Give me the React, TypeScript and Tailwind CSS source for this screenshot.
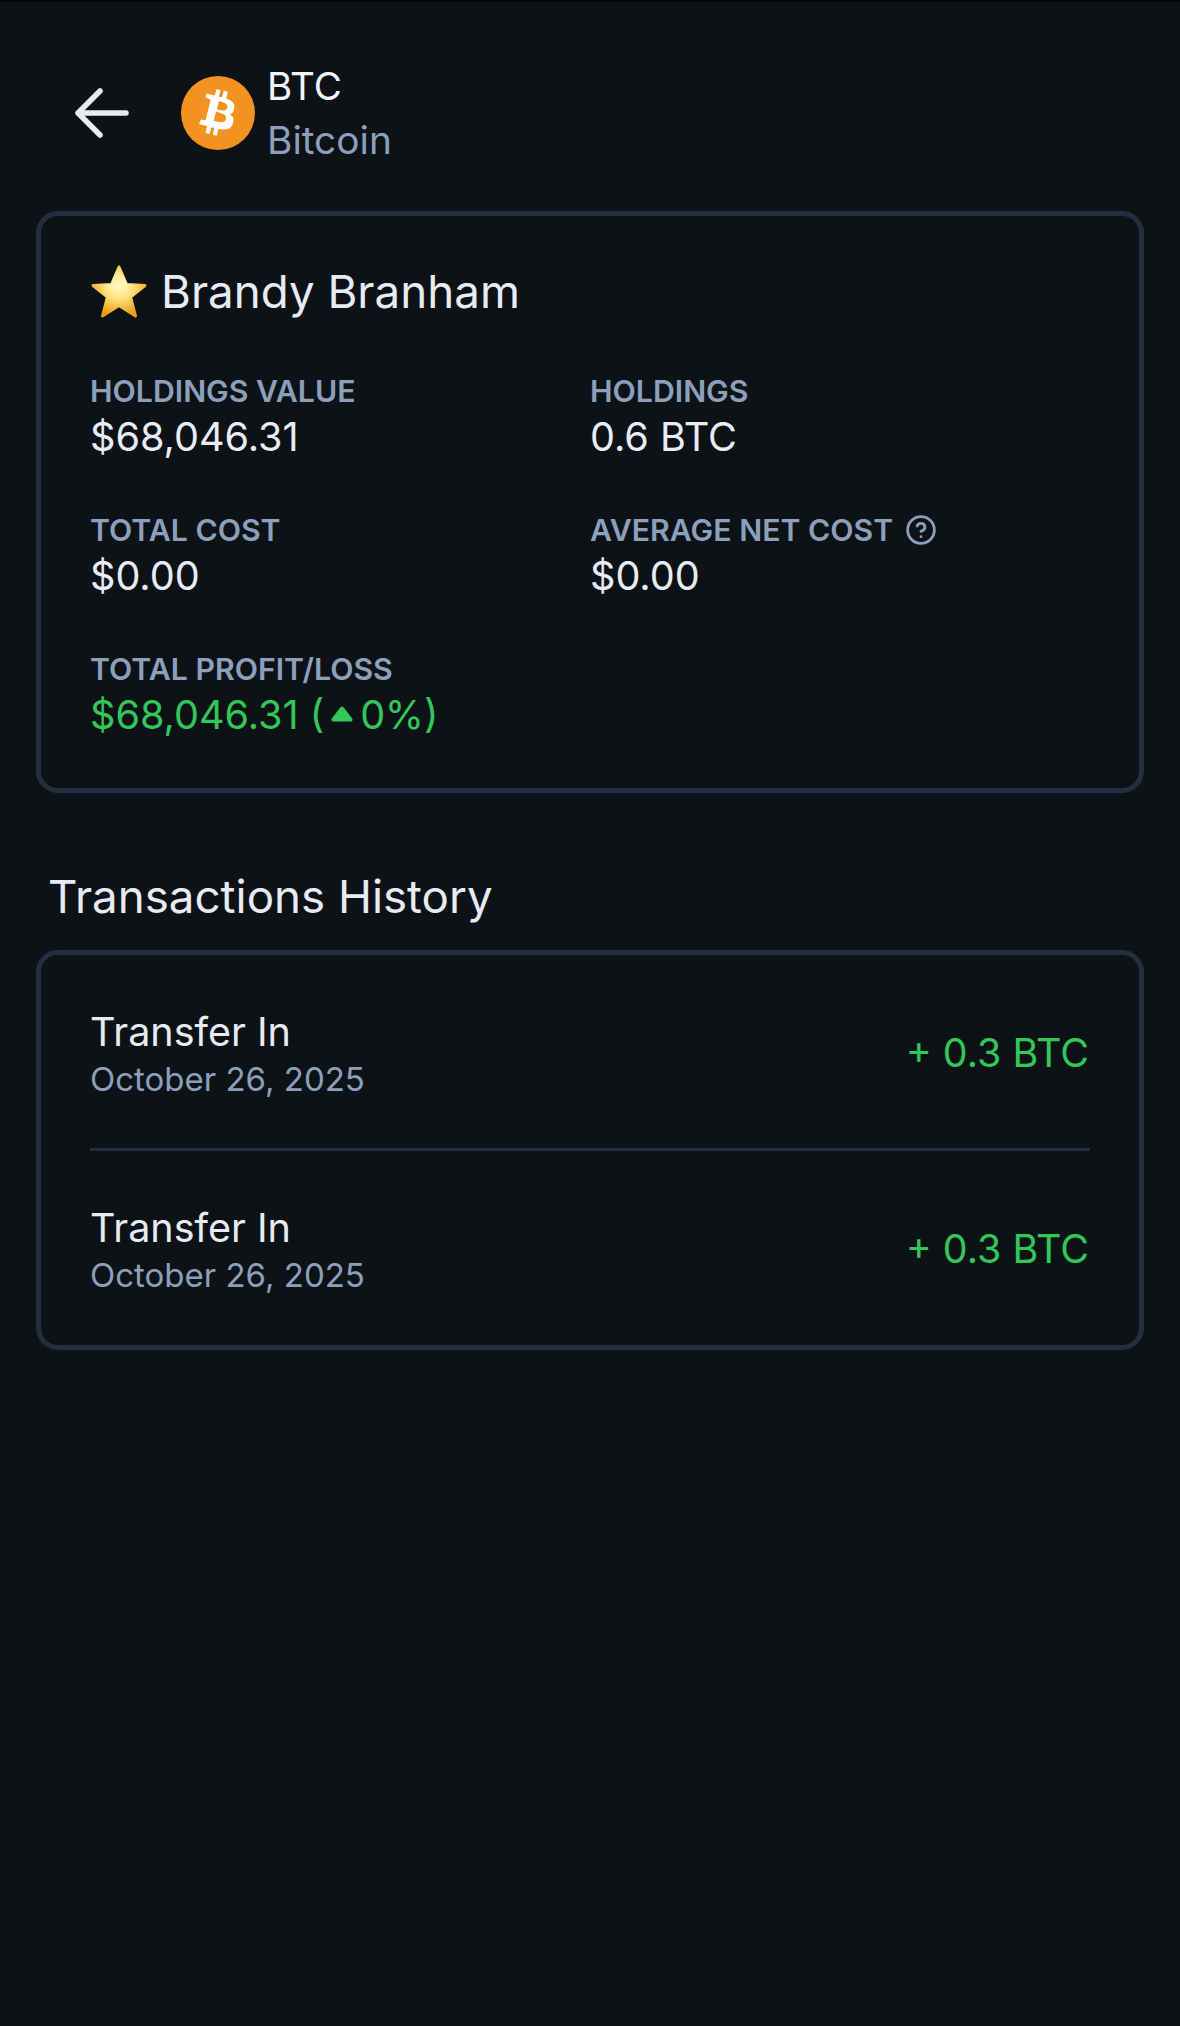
import { CircleHelp } from "lucide-react";

const stats = [
  { label: "HOLDINGS VALUE", value: "$68,046.31" },
  { label: "HOLDINGS", value: "0.6 BTC" },
  { label: "TOTAL COST", value: "$0.00" },
  { label: "AVERAGE NET COST", value: "$0.00", help: true },
];

const transactions = [
  { title: "Transfer In", date: "October 26, 2025", amount: "+ 0.3 BTC" },
  { title: "Transfer In", date: "October 26, 2025", amount: "+ 0.3 BTC" },
];

function BitcoinLogo() {
  return (
    <svg viewBox="0 0 64 64" className="h-[74px] w-[74px] shrink-0">
      <circle cx="32" cy="32" r="32" fill="#f2921f" />
      <path
        fill="#fff"
        d="M46.103,27.444c0.637-4.258-2.605-6.547-7.038-8.074l1.438-5.768l-3.511-0.875l-1.4,5.616c-0.923-0.23-1.871-0.447-2.813-0.662l1.41-5.653l-3.509-0.875l-1.439,5.766c-0.764-0.174-1.514-0.346-2.242-0.527l0.004-0.018l-4.842-1.209l-0.934,3.75c0,0,2.605,0.597,2.55,0.634c1.422,0.355,1.679,1.296,1.636,2.042l-1.638,6.571c0.098,0.025,0.225,0.061,0.365,0.117c-0.117-0.029-0.242-0.061-0.371-0.092l-2.296,9.205c-0.174,0.432-0.615,1.08-1.609,0.834c0.035,0.051-2.552-0.637-2.552-0.637l-1.743,4.019l4.569,1.139c0.85,0.213,1.683,0.436,2.503,0.646l-1.453,5.834l3.507,0.875l1.439-5.772c0.958,0.26,1.888,0.5,2.798,0.726l-1.434,5.745l3.511,0.875l1.453-5.823c5.987,1.133,10.489,0.676,12.384-4.739c1.527-4.36-0.076-6.875-3.226-8.515C44.083,33.116,45.823,31.212,46.103,27.444z M39.06,37.329c-1.085,4.36-8.426,2.003-10.806,1.412l1.928-7.729C32.562,31.606,40.194,32.782,39.06,37.329z M40.146,27.381c-0.99,3.966-7.1,1.951-9.082,1.457l1.748-7.01C34.794,22.322,41.178,23.244,40.146,27.381z"
      />
    </svg>
  );
}

function StarEmoji() {
  return (
    <svg viewBox="0 0 58 56" className="h-[56px] w-[58px] shrink-0">
      <defs>
        <radialGradient id="star" cx="50%" cy="38%" r="62%">
          <stop offset="0%" stopColor="#fff8d0" />
          <stop offset="40%" stopColor="#ffe684" />
          <stop offset="100%" stopColor="#eb9c14" />
        </radialGradient>
      </defs>
      <path
        fill="url(#star)"
        stroke="url(#star)"
        strokeWidth="3"
        strokeLinejoin="round"
        d="M29 3 L36.5 20.5 L55 21.5 L40.5 33 L45.5 52 L29 41.5 L12.5 52 L17.5 33 L3 21.5 L21.5 20.5 Z"
      />
    </svg>
  );
}

export default function App() {
  return (
    <div className="min-h-[2026px] w-[1180px] border-t-2 border-[#05070b] bg-[#0d1217] font-['Inter',sans-serif]">
      {/* Header */}
      <div className="flex items-center pl-[75px] pt-[57px]">
        <svg viewBox="0 0 54 50" fill="none" className="h-[50px] w-[54px] shrink-0" stroke="#e6ebf4" strokeWidth="5.5" strokeLinecap="round" strokeLinejoin="round">
          <path d="M51 25H3M25 3L3 25L25 47" />
        </svg>
        <div className="ml-[52px]">
          <BitcoinLogo />
        </div>
        <div className="ml-[12px] flex flex-col">
          <span className="text-[38.5px] leading-[54px] text-[#f1f5f9]">BTC</span>
          <span className="text-[38.8px] leading-[54px] text-[#8ca0bb]">Bitcoin</span>
        </div>
      </div>

      {/* Holdings card */}
      <div className="mx-[36px] mt-[44px] h-[582px] rounded-[22px] border-[5px] border-[#232f40] px-[49px] pt-[48px]">
        <div className="flex items-center gap-[13px]">
          <StarEmoji />
          <h1 className="text-[45.7px] leading-[56px] text-[#e6ebf4]">Brandy Branham</h1>
        </div>
        <div className="mt-[49px] grid grid-cols-2 gap-y-[46px]">
          {stats.map((s) => (
            <div key={s.label}>
              <div className="flex items-center gap-[12px] text-[30.25px] font-semibold leading-[44px] text-[#8ca0bb]">
                {s.label}
                {s.help && <CircleHelp className="h-[32px] w-[32px]" strokeWidth={2.1} />}
              </div>
              <div className="text-[39.6px] leading-[49px] text-[#e8edf5]">{s.value}</div>
            </div>
          ))}
          <div className="col-span-2">
            <div className="text-[30.25px] font-semibold leading-[44px] text-[#8ca0bb]">TOTAL PROFIT/LOSS</div>
            <div className="flex items-center text-[39.6px] leading-[49px] text-[#33c75a]">
              $68,046.31 (
              <svg viewBox="0 0 24 16" className="mx-[6px] mb-[4px] h-[16px] w-[24px]" fill="#33c75a">
                <path d="M10.4 1.2a2 2 0 0 1 3.2 0l8.6 11.4c.8 1.1.1 2.9-1.4 2.9H3.2c-1.5 0-2.2-1.8-1.4-2.9z" />
              </svg>
              0%)
            </div>
          </div>
        </div>
      </div>

      {/* Transactions */}
      <h2 className="ml-[48px] mt-[76px] text-[45.7px] leading-[56px] text-[#e6ebf4]">Transactions History</h2>
      <div className="mx-[36px] mt-[25px] rounded-[22px] border-[5px] border-[#232f40] px-[49px]">
        {transactions.map((t, i) => (
          <div
            key={i}
            className={`flex items-center justify-between ${i === 0 ? "border-b-[3px] border-[#232f40] pb-[46px] pt-[52px]" : "pb-[47px] pt-[52px]"}`}
          >
            <div className="flex flex-col">
              <span className="text-[39.5px] leading-[50px] text-[#e6ebf4]">{t.title}</span>
              <span className="text-[33px] leading-[45px] text-[#8ca0bb]">{t.date}</span>
            </div>
            <span className="mb-[3px] mr-[1px] text-[39.4px] leading-[50px] text-[#33c75a]">{t.amount}</span>
          </div>
        ))}
      </div>
    </div>
  );
}
